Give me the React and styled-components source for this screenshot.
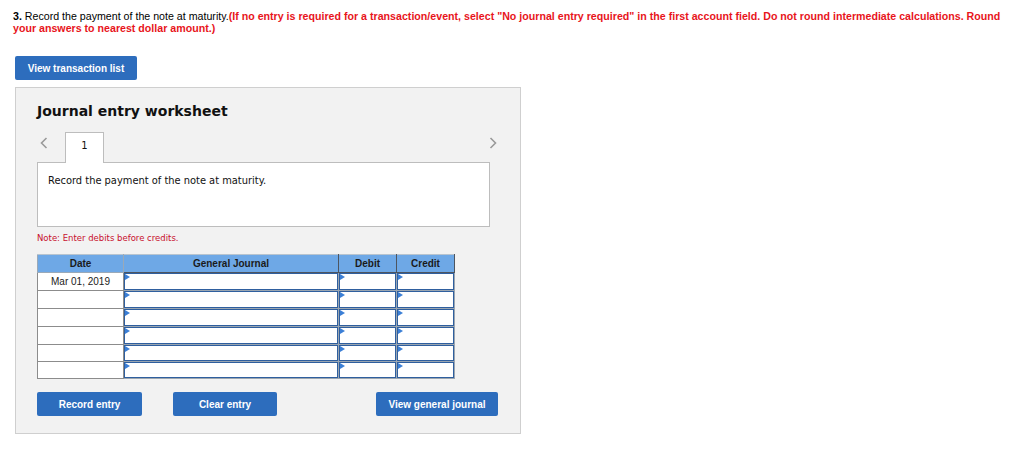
import React from "react";
import styled, { createGlobalStyle } from "styled-components";

const Global = createGlobalStyle`
  html, body { margin: 0; padding: 0; background: #fff; }
  body { font-family: "Liberation Sans", Arial, sans-serif; }
`;

const Page = styled.div`
  padding: 10px 0 0 13px;
  width: 1000px;
`;

const Question = styled.div`
  font-family: "Liberation Sans", Arial, sans-serif;
  font-size: 10.65px;
  line-height: 12px;
  color: #000;
`;

const Num = styled.b`
  font-weight: bold;
`;

const Red = styled.span`
  color: #e8141b;
  font-weight: bold;
`;

const BlueButton = styled.button`
  display: inline-flex;
  align-items: center;
  justify-content: center;
  width: ${(p) => p.$w}px;
  height: 24px;
  padding: 0;
  border: none;
  border-radius: 2px;
  background: #2d6dbd;
  color: #fff;
  font-family: "Liberation Sans", Arial, sans-serif;
  font-weight: bold;
  font-size: 10px;
  cursor: pointer;
`;

const TopButtonRow = styled.div`
  margin-top: 22px;
  margin-left: 2px;
`;

const Panel = styled.div`
  margin-top: 7px;
  margin-left: 2px;
  width: 504px;
  height: 345px;
  box-sizing: content-box;
  background: #f2f2f2;
  border: 1px solid #cfcfcf;
  display: flex;
  flex-direction: column;
`;

const Inner = styled.div`
  padding: 0 0 0 21px;
  display: flex;
  flex-direction: column;
`;

const Title = styled.h2`
  margin: 14px 0 0 0;
  font-family: "DejaVu Sans", Verdana, sans-serif;
  font-weight: bold;
  font-size: 14px;
  line-height: 18px;
  color: #111;
`;

const TabRow = styled.div`
  display: flex;
  align-items: flex-end;
  margin-top: 11px;
  width: 460px;
  height: 31px;
`;

const ArrowBox = styled.div`
  align-self: flex-start;
  margin-top: 6px;
  width: 28px;
  display: flex;
  justify-content: ${(p) => (p.$right ? "flex-end" : "flex-start")};
  padding-left: ${(p) => (p.$right ? 0 : 3)}px;
  box-sizing: border-box;
`;

const Tab = styled.div`
  width: 39px;
  height: 31px;
  box-sizing: border-box;
  border: 1px solid #bdbdbd;
  border-bottom: none;
  background: #fff;
  font-family: "DejaVu Sans", Verdana, sans-serif;
  font-size: 10px;
  text-align: center;
  padding-top: 7px;
  color: #111;
  position: relative;
  z-index: 1;
  margin-bottom: -1px;
`;

const Spacer = styled.div`
  flex: 1;
`;

const ContentBox = styled.div`
  width: 453px;
  height: 65px;
  box-sizing: border-box;
  border: 1px solid #bdbdbd;
  background: #fff;
  padding: 12px 0 0 10px;
  font-family: "DejaVu Sans", Verdana, sans-serif;
  font-size: 9.9px;
  color: #111;
`;

const Note = styled.div`
  margin-top: 6px;
  font-family: "DejaVu Sans", Verdana, sans-serif;
  font-size: 8.5px;
  color: #c8102e;
`;

const Table = styled.table`
  margin-top: 11px;
  border-collapse: collapse;
  width: 417px;
  table-layout: fixed;
`;

const Th = styled.th`
  width: ${(p) => p.$w}px;
  height: 17px;
  padding: 0;
  background: #6ea8e6;
  border: 1px solid ${(p) => (p.$dark ? "#4d5560" : "#9aa9b8")};
  border-top: 1px solid #b8c4cf;
  font-family: "Liberation Sans", Arial, sans-serif;
  font-size: 10px;
  font-weight: bold;
  color: #1b1b1b;
  text-align: center;
`;

const DateCell = styled.td`
  height: ${(p) => p.$h - 1}px;
  padding: 0;
  border: 1px solid #8c8c8c;
  background: #fff;
  font-family: "Liberation Sans", Arial, sans-serif;
  font-size: 10px;
  color: #222;
  text-align: center;
`;

const InputCell = styled.td`
  height: ${(p) => p.$h - 1}px;
  padding: 0;
  border: 1px solid #9ba6b1;
  background: #fff;
`;

const InputBox = styled.div`
  position: relative;
  height: ${(p) => p.$h - 1}px;
  box-sizing: border-box;
  border: 1.5px solid #2f5f9f;
  background: #fff;
  &::before {
    content: "";
    position: absolute;
    left: 0;
    top: 0;
    width: 0;
    height: 0;
    border-top: 3px solid transparent;
    border-bottom: 3px solid transparent;
    border-left: 5px solid #3b7fd6;
  }
`;

const ButtonRow = styled.div`
  display: flex;
  margin-top: 13px;
  width: 461px;
`;

const Gap = styled.div`
  width: ${(p) => p.$w || 0}px;
  flex: ${(p) => (p.$grow ? 1 : "none")};
`;

const Chevron = ({ dir }) => (
  <svg width="8" height="12" viewBox="0 0 8 12">
    <polyline
      points={dir === "left" ? "6.5,1 1.5,6 6.5,11" : "1.5,1 6.5,6 1.5,11"}
      fill="none"
      stroke="#9a9a9a"
      strokeWidth="1.6"
    />
  </svg>
);

const rows = [
  { date: "Mar 01, 2019", h: 18 },
  { date: "", h: 18 },
  { date: "", h: 18 },
  { date: "", h: 18 },
  { date: "", h: 17 },
  { date: "", h: 17 },
];

export default function App() {
  return (
    <>
      <Global />
      <Page>
        <Question>
          <Num>3.</Num> Record the payment of the note at maturity.
          <Red>
            (If no entry is required for a transaction/event, select "No journal entry
            required" in the first account field. Do not round intermediate calculations.
            Round your answers to nearest dollar amount.)
          </Red>
        </Question>
        <TopButtonRow>
          <BlueButton $w={122}>View transaction list</BlueButton>
        </TopButtonRow>
        <Panel>
          <Inner>
            <Title>Journal entry worksheet</Title>
            <TabRow>
              <ArrowBox>
                <Chevron dir="left" />
              </ArrowBox>
              <Tab>1</Tab>
              <Spacer />
              <ArrowBox $right>
                <Chevron dir="right" />
              </ArrowBox>
            </TabRow>
            <ContentBox>Record the payment of the note at maturity.</ContentBox>
            <Note>Note: Enter debits before credits.</Note>
            <Table>
              <thead>
                <tr>
                  <Th $w={85}>Date</Th>
                  <Th $w={214} $dark>General Journal</Th>
                  <Th $w={57} $dark>Debit</Th>
                  <Th $w={57} $dark>Credit</Th>
                </tr>
              </thead>
              <tbody>
                {rows.map((r, i) => (
                  <tr key={i}>
                    <DateCell $h={r.h}>{r.date}</DateCell>
                    <InputCell $h={r.h}>
                      <InputBox $h={r.h} />
                    </InputCell>
                    <InputCell $h={r.h}>
                      <InputBox $h={r.h} />
                    </InputCell>
                    <InputCell $h={r.h}>
                      <InputBox $h={r.h} />
                    </InputCell>
                  </tr>
                ))}
              </tbody>
            </Table>
            <ButtonRow>
              <BlueButton $w={105}>Record entry</BlueButton>
              <Gap $w={31} />
              <BlueButton $w={104}>Clear entry</BlueButton>
              <Gap $grow />
              <BlueButton $w={122}>View general journal</BlueButton>
            </ButtonRow>
          </Inner>
        </Panel>
      </Page>
    </>
  );
}
